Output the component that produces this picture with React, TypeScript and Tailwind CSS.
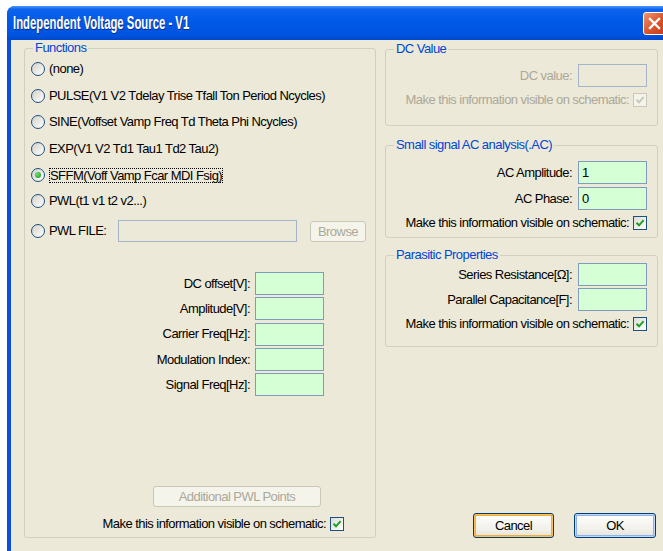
import type { ReactNode } from "react";
import clsx from "clsx";

// Luna-style dialog for editing an independent voltage source

const GroupBox = ({ title, className, children }: { title: string; className?: string; children?: ReactNode }) => (
  <div className={clsx("relative rounded-[3px] border border-[#d0d0bf]", className)}>
    <span className="absolute -top-[8px] left-[8px] bg-[#ece9d8] px-[2px] leading-[14px] text-[#0046d5]">{title}</span>
    {children}
  </div>
);

const Radio = ({ checked }: { checked?: boolean }) => (
  <span className="flex h-[14px] w-[14px] shrink-0 items-center justify-center rounded-full border border-[#1c5180] bg-[linear-gradient(135deg,#d4d1c6,#ffffff)]">
    {checked && <span className="h-[6px] w-[6px] rounded-full bg-[radial-gradient(circle_at_35%_35%,#6fe06f,#179417)]" />}
  </span>
);

const Checkbox = ({ disabled }: { disabled?: boolean }) => (
  <span
    className={clsx(
      "flex h-[14px] w-[14px] shrink-0 items-center justify-center border",
      disabled ? "border-[#c9c7ba] bg-[#f5f4ea]" : "border-[#1c5180] bg-[linear-gradient(135deg,#dcdcd6,#ffffff)]"
    )}
  >
    <svg width="10" height="10" viewBox="0 0 10 10">
      <path
        d="M1.5 4.8 L4 7.3 L8.6 2.2"
        fill="none"
        stroke={disabled ? "#c9c7ba" : "#21a121"}
        strokeWidth="2"
      />
    </svg>
  </span>
);

const Field = ({ label, value, className }: { label: string; value?: string; className?: string }) => (
  <div className={clsx("flex h-[23px] items-center justify-end gap-[6px]", className)}>
    <span>{label}</span>
    <input
      readOnly
      value={value ?? ""}
      className="h-[23px] w-[69px] border border-[#7f9db9] bg-[#d5ffd5] px-[3px] outline-none"
    />
  </div>
);

const VisibleRow = ({ disabled, className }: { disabled?: boolean; className?: string }) => (
  <div className={clsx("flex h-[16px] items-center justify-end gap-[4px]", disabled && "text-[#aca899]", className)}>
    <span>Make this information visible on schematic:</span>
    <Checkbox disabled={disabled} />
  </div>
);

const functions = [
  { label: "(none)", h: "h-[27px]" },
  { label: "PULSE(V1 V2 Tdelay Trise Tfall Ton Period Ncycles)", h: "h-[27px]" },
  { label: "SINE(Voffset Vamp Freq Td Theta Phi Ncycles)", h: "h-[26px]" },
  { label: "EXP(V1 V2 Td1 Tau1 Td2 Tau2)", h: "h-[27px]" },
  { label: "SFFM(Voff Vamp Fcar MDI Fsig)", h: "h-[26px]", checked: true },
  { label: "PWL(t1 v1 t2 v2...)", h: "h-[26px]" },
];

const params = ["DC offset[V]:", "Amplitude[V]:", "Carrier Freq[Hz]:", "Modulation Index:", "Signal Freq[Hz]:"];

export default function App() {
  return (
    <div className="h-[551px] w-[663px] overflow-hidden bg-white pl-[7px] pt-[6px] font-['Liberation_Sans',Arial,sans-serif] text-[13px] tracking-[-0.55px] text-black">
      <div className="flex h-[545px] w-[665px] flex-col overflow-hidden rounded-t-[8px] bg-[#0b4fd9]">
        {/* title bar */}
        <div className="flex h-[34px] shrink-0 items-start justify-between bg-[linear-gradient(180deg,#4a97fc_0%,#0d63ec_10%,#0059e7_45%,#0054e0_85%,#0048cc_100%)] pl-[6px] pr-[6px]">
          <span className="mt-[7px] inline-block origin-left scale-x-[0.63] text-[18px] font-bold leading-[21px] tracking-normal text-white [text-shadow:1px_1px_0_#0a2a8a]">
            Independent Voltage Source - V1
          </span>
          <span className="mt-[6px] flex h-[23px] w-[23px] items-center justify-center rounded-[3px] border border-white bg-[linear-gradient(135deg,#f0956e,#d9532a_55%,#c2401c)]">
            <svg width="13" height="13" viewBox="0 0 13 13">
              <path d="M2 2 L11 11 M11 2 L2 11" stroke="white" strokeWidth="2.4" strokeLinecap="square" />
            </svg>
          </span>
        </div>

        {/* dialog body */}
        <div className="ml-[4px] flex flex-1 items-start gap-[9px] bg-[#ece9d8] pb-[13px] pl-[13px] pt-[8px]">
          <GroupBox title="Functions" className="flex h-[490px] w-[352px] flex-col pl-[6px] pt-[6px]">
            {functions.map((f) => (
              <div key={f.label} className={clsx("flex items-center gap-[4px]", f.h)}>
                <Radio checked={f.checked} />
                <span className={clsx(f.checked && "border border-dotted border-black leading-[13px]")}>{f.label}</span>
              </div>
            ))}
            <div className="mt-[5px] flex h-[24px] items-center">
              <Radio />
              <span className="ml-[4px] w-[69px]">PWL FILE:</span>
              <div className="h-[22px] w-[179px] border border-[#a5b5c9]" />
              <button className="ml-[13px] h-[21px] w-[56px] rounded-[3px] border border-[#c9c7ba] bg-[#f5f4ea] text-[#aca899]">
                Browse
              </button>
            </div>

            <div className="mt-[29px] flex w-[293px] flex-col gap-[2.25px]">
              {params.map((p) => (
                <Field key={p} label={p} className="!gap-[5px]" />
              ))}
            </div>

            <div className="flex-1" />
            <button className="ml-[122px] h-[21px] w-[168px] rounded-[3px] border border-[#c9c7ba] bg-[#f5f4ea] text-[#aca899]">
              Additional PWL Points
            </button>
            <VisibleRow className="mb-[5px] mr-[31px] mt-[9px]" />
          </GroupBox>

          <div className="mt-[1px] flex w-[273px] flex-col self-stretch">
            <GroupBox title="DC Value" className="h-[77px] pr-[10px] pt-[14px]">
              <div className="flex h-[23px] items-center justify-end gap-[6px] text-[#aca899]">
                <span>DC value:</span>
                <div className="h-[23px] w-[69px] border border-[#a5b5c9]" />
              </div>
              <VisibleRow disabled className="mt-[5px]" />
            </GroupBox>

            <GroupBox title="Small signal AC analysis(.AC)" className="mt-[19px] h-[93px] pr-[10px] pt-[15px]">
              <Field label="AC Amplitude:" value="1" />
              <Field label="AC Phase:" value="0" className="mt-[3px]" />
              <VisibleRow className="mt-[5px]" />
            </GroupBox>

            <GroupBox title="Parasitic Properties" className="mt-[17px] h-[92px] pr-[10px] pt-[7px]">
              <Field label="Series Resistance[Ω]:" />
              <Field label="Parallel Capacitance[F]:" className="mt-[2px]" />
              <VisibleRow className="mt-[5px]" />
            </GroupBox>

            <div className="mt-auto flex gap-[20px] pl-[88px]">
              <button className="h-[25px] w-[81px] rounded-[3px] border border-[#003c74] bg-[linear-gradient(180deg,#ffffff,#f0efe8_70%,#e3e1d6)] shadow-[inset_0_0_0_1px_#f9c25b,inset_0_0_0_2px_#f1ad3b]">
                Cancel
              </button>
              <button className="h-[25px] w-[82px] rounded-[3px] border border-[#003c74] bg-[linear-gradient(180deg,#ffffff,#f0efe8_70%,#e3e1d6)] shadow-[inset_0_0_0_1px_#c2d8fb,inset_0_0_0_2px_#8fb1ea]">
                OK
              </button>
            </div>
          </div>
        </div>
      </div>
    </div>
  );
}
